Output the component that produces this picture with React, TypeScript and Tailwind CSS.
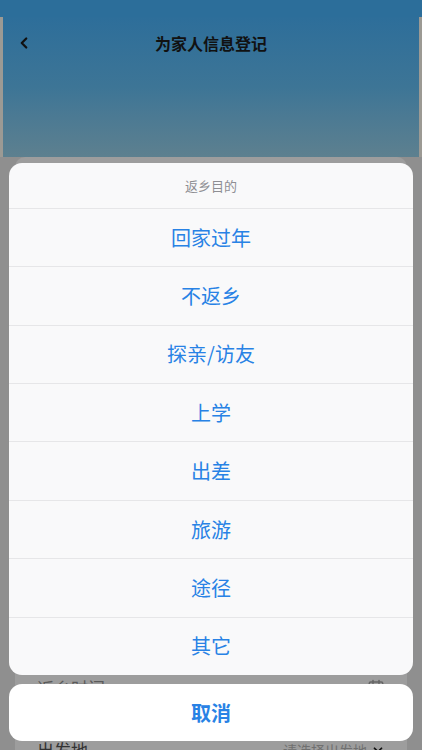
import { ChevronLeft, ChevronDown, CalendarDays } from "lucide-react";

const options = ["回家过年", "不返乡", "探亲/访友", "上学", "出差", "旅游", "途径", "其它"];

const font = "font-['Noto_Sans_CJK_SC','Noto_Sans',sans-serif]";

export default function App() {
  return (
    <div className={`relative h-[750px] w-full overflow-hidden bg-[#8f8f8f] ${font}`}>
      {/* page behind the sheet (already dimmed) */}
      <div className="h-[17px] bg-[#2c6e9a]" />
      <div className="flex bg-[#9c9a94]">
        <div className="mx-[3px] flex h-[140px] flex-1 flex-col bg-gradient-to-b from-[#2d6e9a] via-[#3d7596] to-[#5d808f]">
          <div className="relative flex h-[52px] items-center justify-center">
            <ChevronLeft className="absolute left-[12px] top-[17px] h-[18px] w-[18px] text-[#111]" strokeWidth={3} />
            <span className="text-[16px] font-bold text-[#111]">为家人信息登记</span>
          </div>
        </div>
      </div>
      <div className="mx-[15px] h-[600px] rounded-t-[10px] bg-[#9d9d9d] px-[22px]">
        <div className="h-[500px]" />
        <div className="flex h-[62px] items-center justify-between text-[17px] text-[#5a5a5a]">
          <span>返乡时间</span>
          <CalendarDays className="h-[18px] w-[18px] text-[#666]" />
        </div>
        <div className="flex h-[62px] items-center justify-between text-[17px]">
          <span className="text-[#333]">出发地</span>
          <span className="flex items-center gap-1 text-[14px] text-[#707070]">
            请选择出发地
            <ChevronDown className="h-[14px] w-[14px] text-[#111]" strokeWidth={3} />
          </span>
        </div>
      </div>

      {/* action sheet */}
      <div className="absolute inset-0 flex flex-col justify-end gap-[9px] px-[9px] pb-[9px]">
        <div className="overflow-hidden rounded-[13px] bg-[#f9f9fa]">
          <div className="flex h-[45px] items-center justify-center text-[13px] text-[#8e8e93]">返乡目的</div>
          {options.map((o) => (
            <div
              key={o}
              className="flex h-[58.4px] items-center justify-center border-t border-[#e6e6e8] text-[20px] text-[#2882e5]"
            >
              {o}
            </div>
          ))}
        </div>
        <div className="flex h-[57px] items-center justify-center rounded-[13px] bg-white text-[20px] font-bold text-[#2882e5]">
          取消
        </div>
      </div>
    </div>
  );
}
